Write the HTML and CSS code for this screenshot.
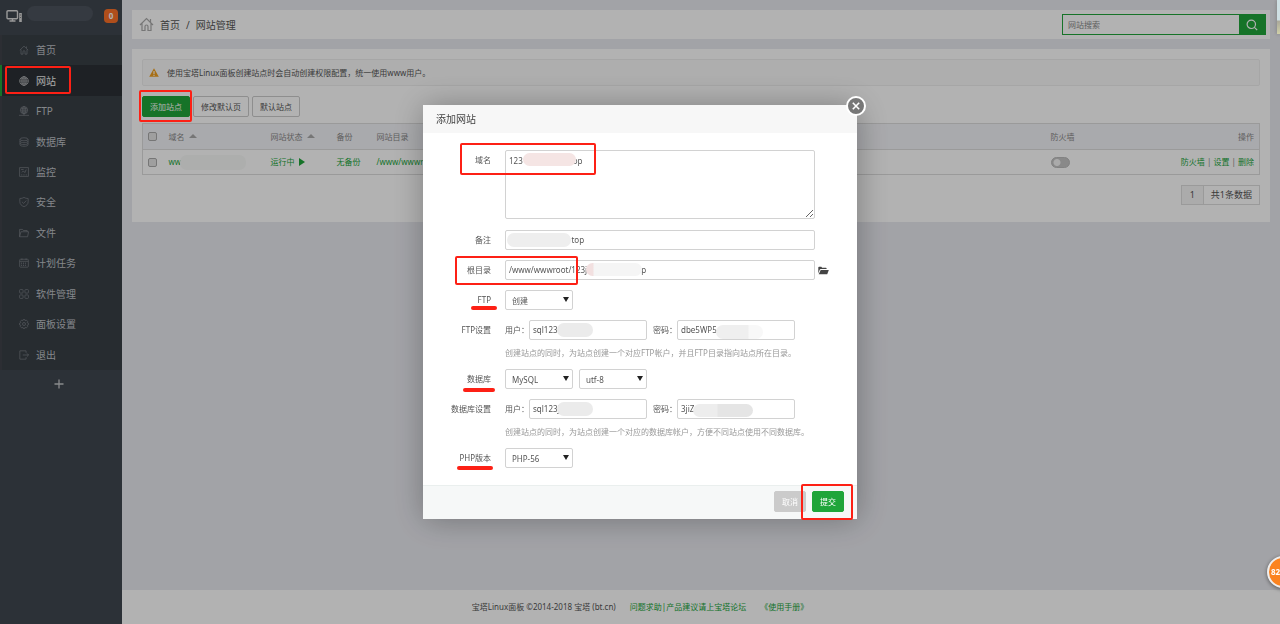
FILE: index.html
```html
<!DOCTYPE html>
<html lang="zh-CN">
<head>
<meta charset="utf-8">
<title>网站管理</title>
<link rel="stylesheet" href="styles.css">
</head>
<body>
<div class="app">
  <aside class="sidebar">
    <div class="account">
      <svg class="account-icon" width="17" height="14" viewBox="0 0 17 14" fill="none" stroke="#dcdcdc" stroke-width="1.4"><rect x="1" y="1.700" width="10.500" height="8" rx="1"/><path d="M3.500 12h6M6.500 10v2"/><path d="M14.500 4v9" stroke-width="2.600"/><path d="M14 6h1M14 8.500h1" stroke="#666" stroke-width=".8"/></svg>
      <span class="account-name"></span>
      <span class="badge">0</span>
    </div>
    <ul class="menu">
      <li><a href="#"><svg viewBox="0 0 12 12"><path d="M1 6.200 6 1.400l5 4.800M2.400 5.500V11h2.400V8a1.200 1.200 0 0 1 2.400 0v3h2.400V5.500M9 1.800v1.800"/></svg>首页</a></li>
      <li class="active"><a href="#"><svg viewBox="0 0 12 12"><circle cx="6" cy="6" r="5.200"/><ellipse cx="6" cy="6" rx="2.500" ry="5.200"/><path d="M.8 6h10.400M6 .8v10.400M1.700 3.400h8.600M1.700 8.600h8.600"/></svg>网站</a></li>
      <li><a href="#"><svg viewBox="0 0 12 12"><circle cx="6" cy="5" r="4.400"/><ellipse cx="6" cy="5" rx="2.100" ry="4.400"/><path d="M1.600 5h8.800M6 .6v10.600M2.300 2.800h7.400M2.300 7.200h7.400M0 11.200h12"/></svg>FTP</a></li>
      <li><a href="#"><svg viewBox="0 0 12 12"><ellipse cx="6" cy="2.700" rx="4.800" ry="1.800"/><path d="M1.200 2.700v6.600c0 2.400 9.600 2.400 9.600 0V2.700M1.200 5c0 2.400 9.600 2.400 9.600 0M1.200 7.300c0 2.400 9.600 2.400 9.600 0"/></svg>数据库</a></li>
      <li><a href="#"><svg viewBox="0 0 12 12"><path d="M.7.7h10.600v10.600H.7zM2.500 3h3M3.500 6.500l1.700-1.800 1.800 2L8.700 3M2.500 9.500h1.500M5.200 9.500h1.500M8 9.500h1.500"/></svg>监控</a></li>
      <li><a href="#"><svg viewBox="0 0 12 12"><path d="M6 .5c1.500 1 3 1.300 5 1.300v3.900c0 3-2.100 4.800-5 5.900C3.100 10.500 1 8.700 1 5.700V1.800C3 1.800 4.500 1.500 6 .5zM3.500 5.700l2 2 3.300-3.400"/></svg>安全</a></li>
      <li><a href="#"><svg viewBox="0 0 12 12"><path d="M.7 10.500V1.700h3.600l1 1.300h4.500v1.500M.7 10.500l1.600-6h9.200l-1.200 6z"/></svg>文件</a></li>
      <li><a href="#"><svg viewBox="0 0 12 12"><rect x=".8" y="1.500" width="10.400" height="9.500" rx="1"/><path d="M.8 4h10.400M3.500.5v2M8.500.5v2"/><path d="M2.500 6.200h7M2.500 8.700h7" stroke-dasharray="1.200 1.100" stroke-width="1.200"/></svg>计划任务</a></li>
      <li><a href="#"><svg viewBox="0 0 12 12"><rect x=".7" y=".7" width="4.200" height="4.200" rx="1"/><rect x="7.100" y=".7" width="4.200" height="4.200" rx="1"/><rect x=".7" y="7.100" width="4.200" height="4.200" rx="1"/><rect x="7.100" y="7.100" width="4.200" height="4.200" rx="1"/></svg>软件管理</a></li>
      <li><a href="#"><svg viewBox="0 0 12 12"><circle cx="6" cy="6" r="1.800"/><path d="M5 .7h2l.4 1.400 1.500-.7 1.500 1.500-.7 1.400 1.600.7v2l-1.600.6.7 1.500-1.500 1.500-1.500-.7-.4 1.400H5l-.5-1.400-1.400.7-1.500-1.500.7-1.500L.7 7V5l1.600-.7-.7-1.400 1.500-1.500 1.400.7z"/></svg>面板设置</a></li>
      <li><a href="#"><svg viewBox="0 0 12 12"><path d="M8.500 3.500V1H1v10h7.500V8.500M4.500 6h7M9.500 4l2 2-2 2"/></svg>退出</a></li>
    </ul>
    <button class="menu-add" type="button" aria-label="添加"><svg width="10" height="10" viewBox="0 0 10 10" stroke="#c4c6c9" stroke-width="1.300"><path d="M5 .5v9M.5 5h9"/></svg></button>
  </aside>

  <div class="main">
    <header class="panel topbar">
      <nav class="crumbs">
        <svg width="15" height="15" viewBox="0 0 15 15" fill="none" stroke="#aaa" stroke-width="1.200"><path d="M1 8 7.500 1.500 14 8M3 6.500v7h3V9.500a1.500 1.500 0 0 1 3 0v4h3v-7M11.500 2v3"/></svg>
        <a href="#">首页</a><span>/</span><a href="#">网站管理</a>
      </nav>
      <form class="search">
        <input type="text" placeholder="网站搜索" aria-label="网站搜索">
        <button type="button" aria-label="搜索"><svg width="12" height="12" viewBox="0 0 12 12" fill="none" stroke="#fff" stroke-width="1.200"><circle cx="5.300" cy="5.300" r="4.200"/><path d="m8.400 8.400 2.800 2.800"/></svg></button>
      </form>
    </header>

    <section class="panel content">
      <p class="notice"><svg width="10" height="9" viewBox="0 0 10 9"><path d="M5 .3 9.800 8.700H.2z" fill="#f0a020"/><path d="M5 3v3M5 6.800v1.100" stroke="#fff" stroke-width="1.100"/></svg>使用宝塔Linux面板创建站点时会自动创建权限配置，统一使用www用户。</p>
      <div class="toolbar">
        <button class="btn btn-green" type="button">添加站点</button>
        <button class="btn" type="button">修改默认页</button>
        <button class="btn" type="button">默认站点</button>
      </div>
      <table class="sites">
        <colgroup><col class="c-check"><col class="c-name"><col class="c-state"><col class="c-backup"><col><col class="c-wall"><col class="c-ops"></colgroup>
        <thead>
          <tr><th><input type="checkbox" aria-label="全选"></th><th>域名<i class="sort"></i></th><th>网站状态<i class="sort"></i></th><th>备份</th><th>网站目录</th><th>防火墙</th><th class="right">操作</th></tr>
        </thead>
        <tbody>
          <tr><td><input type="checkbox" aria-label="选择站点"></td><td><span class="site-name"><a href="#">ww</a><span class="mask mask-site"></span></span></td><td><a href="#">运行中<i class="play"></i></a></td><td><a href="#">无备份</a></td><td><a href="#">/www/wwwroot/</a></td><td><input class="switch" type="checkbox" aria-label="防火墙"></td><td class="right"><a href="#">防火墙</a> | <a href="#">设置</a> | <a href="#">删除</a></td></tr>
        </tbody>
      </table>
      <div class="pager"><span class="page">1</span><span>共1条数据</span></div>
    </section>

    <footer class="footer">
      <span>宝塔Linux面板 ©2014-2018 宝塔 (bt.cn)</span>
      <a href="#">问题求助|产品建议请上宝塔论坛</a>
      <a href="#">《使用手册》</a>
    </footer>
  </div>
</div>

<div class="overlay">
  <form class="modal" role="dialog" aria-labelledby="modal-title">
    <h2 class="modal-title" id="modal-title">添加网站</h2>
    <button class="close" type="button" aria-label="关闭"><svg width="8" height="8" viewBox="0 0 8 8" stroke="#fff" stroke-width="1.600"><path d="m.8.8 6.400 6.400M7.200.8.8 7.200"/></svg></button>
    <div class="modal-body">
      <div class="row row-domain">
        <label for="domain">域名</label>
        <div class="field"><textarea id="domain">123                        op</textarea><span class="mask mask-domain"></span></div>
      </div>
      <div class="row">
        <label for="note">备注</label>
        <div class="field"><input class="wide" id="note" type="text" value="                              top"><span class="mask mask-note"></span></div>
      </div>
      <div class="row">
        <label for="root">根目录</label>
        <div class="field"><input class="wide" id="root" type="text" value="/www/wwwroot/123j                          p"><span class="mask mask-root"></span>
          <button class="folder" type="button" aria-label="选择目录"><svg width="11" height="9" viewBox="0 0 11 9" fill="#444"><path d="M.3 7.500V1.500Q.3.700 1.100.7h2.200l.8 1h3.800q.7 0 .7.700v.7H2.800Q2 3.100 1.700 3.800z"/><path d="M2.700 3.900h8.100L9.200 8.200H.7z"/></svg></button></div>
      </div>
      <div class="row">
        <label for="ftp">FTP</label>
        <div class="field"><span class="select"><select id="ftp"><option>创建</option></select></span></div>
      </div>
      <div class="row">
        <span class="label">FTP设置</span>
        <div>
          <div class="field pair"><label for="fu">用户：</label><input id="fu" type="text" value="sql123"><label class="second" for="fp">密码：</label><input id="fp" type="text" value="dbe5WP5"><span class="mask mask-user"></span><span class="mask mask-pass"></span></div>
          <p class="hint">创建站点的同时，为站点创建一个对应FTP帐户，并且FTP目录指向站点所在目录。</p>
        </div>
      </div>
      <div class="row">
        <label for="db">数据库</label>
        <div class="field selects"><span class="select"><select id="db"><option>MySQL</option></select></span><span class="select"><select aria-label="编码"><option>utf-8</option></select></span></div>
      </div>
      <div class="row">
        <span class="label">数据库设置</span>
        <div>
          <div class="field pair"><label for="du">用户：</label><input id="du" type="text" value="sql123j"><label class="second" for="dp">密码：</label><input id="dp" type="text" value="3jiZ"><span class="mask mask-user"></span><span class="mask mask-dbpass"></span></div>
          <p class="hint">创建站点的同时，为站点创建一个对应的数据库帐户，方便不同站点使用不同数据库。</p>
        </div>
      </div>
      <div class="row">
        <label for="php">PHP版本</label>
        <div class="field"><span class="select"><select id="php"><option>PHP-56</option></select></span></div>
      </div>
    </div>
    <div class="modal-foot">
      <button class="btn btn-gray" type="button">取消</button>
      <button class="btn btn-green" type="button">提交</button>
    </div>
    <span class="mark mark-domain"></span>
    <span class="mark mark-root"></span>
    <span class="mark mark-submit"></span>
    <span class="line line-ftp"></span>
    <span class="line line-db"></span>
    <span class="line line-php"></span>
  </form>
</div>
<span class="mark mark-menu"></span>
<span class="mark mark-add"></span>
<span class="thumb"></span>
<span class="ball">82</span>
</body>
</html>
```
FILE: styles.css
```css
* { box-sizing: border-box; }
body {
  margin: 0;
  overflow: hidden;
  font: 8px/12px "Noto Sans", "Noto Sans CJK SC", sans-serif;
  color: #555;
  background: #e9eaf0;
}
a { color: inherit; text-decoration: none; }
button, input, select, textarea { font: inherit; color: inherit; margin: 0; }
button { padding: 0; border: 0; background: none; }
svg { display: block; flex: none; }
p, h2, ul { margin: 0; padding: 0; }

.app { display: flex; min-height: 100vh; }

/* Sidebar */
.sidebar { flex: none; width: 122px; background: #40474f; }
.account { display: flex; align-items: center; height: 35px; padding: 0 4px 4px 6px; }
.account-name { width: 67px; height: 15px; margin: 0 11px 5px 4px; border-radius: 8px; background: #4c535d; }
.badge {
  width: 14px; height: 14px; border-radius: 4px;
  background: #fb7028; color: #fff; font-weight: bold; line-height: 14px; text-align: center;
}
.menu { display: flex; flex-direction: column; height: 335px; list-style: none; background: #383f46; }
.menu li { flex: 1; border-left: 2px solid #40434a; }
.menu a { display: flex; align-items: center; gap: 7px; height: 100%; padding-left: 17px; color: #bfc2c6; font-size: 10px; }
.menu svg { width: 10px; height: 10px; fill: none; stroke: #80858b; stroke-width: .8; }
.menu .active { background: #2c3035; border-left-color: #20a53a; }
.menu .active a { color: #f0f0f0; }
.menu .active svg { stroke: #c4c6c9; }
.menu-add { display: flex; justify-content: center; align-items: center; width: 100%; height: 28px; padding-right: 4px; }

/* Page */
.main { flex: 1; display: flex; flex-direction: column; min-width: 0; }
.panel { margin: 10px 10px 0; background: #fff; }
.topbar { display: flex; justify-content: space-between; align-items: center; padding: 4px 4px 4px 7px; }
.crumbs { display: flex; align-items: center; gap: 6px; font-size: 10px; }
.search { display: flex; height: 21px; border: 1px solid #20a53a; }
.search input { width: 176px; padding: 0 5px; border: 0; outline: 0; }
.search input::placeholder { color: #888; }
.search button { display: flex; align-items: center; justify-content: center; width: 26px; background: #20a53a; }
.content { padding: 10px 10px 17px; }
.notice {
  display: flex; align-items: center; gap: 8px; height: 27px; padding-left: 6px;
  border: 1px solid #eee; border-radius: 2px; background: #fafafa;
}
.toolbar { display: flex; gap: 3px; margin: 10px 0 6px; }
.btn { height: 21px; padding: 0 7px; border: 1px solid #ccc; border-radius: 2px; background: #fff; }
.btn-green { border-color: #20a53a; background: #20a53a; color: #fff; }
.btn-gray { border-color: #cbcbcb; background: #cbcbcb; color: #fff; }

.sites { width: 100%; table-layout: fixed; border-collapse: collapse; border: 1px solid #ddd; color: #888; }
.sites th, .sites td { height: 26px; padding: 0 5px; text-align: left; font-weight: normal; border-bottom: 1px solid #ddd; }
.sites td { height: 25px; }
.sites th { background: #f3f4f8; }
.sites td a { color: #20a53a; }
.sites .right { text-align: right; }
.c-check { width: 21px; }
.c-name { width: 102px; }
.c-state { width: 66px; }
.c-backup { width: 40px; }
.c-wall { width: 100px; }
.c-ops { width: 114px; }
.sites input { display: block; appearance: none; }
.sites input:not(.switch) { width: 9px; height: 9px; border: 1px solid #aaa; border-radius: 2px; background: #e4e4e4; }
.sites .switch { width: 19px; height: 11px; border-radius: 6px; background: radial-gradient(circle at 5px 50%, #f4f4f4 3px, #c4c4c4 4px); border: 1px solid #bbb; }
.sort { display: inline-block; margin: 0 0 2px 4px; border: 4px solid transparent; border-top: 0; border-bottom-color: #aaa; }
.play { display: inline-block; margin: 0 0 1px 4px; border: 4px solid transparent; border-left: 6px solid #20a53a; border-right: 0; vertical-align: middle; }
.site-name { position: relative; display: block; }
.pager { display: flex; width: max-content; margin: 10px 0 0 auto; border: 1px solid #ddd; line-height: 18px; font-size: 9px; }
.pager span { padding: 0 7px; }
.pager .page { padding: 0 8px; border-right: 1px solid #ddd; background: #f5f5f5; }
.footer { display: flex; justify-content: center; gap: 14px; margin-top: auto; padding: 11px 122px 11px 0; background: #fff; }
.footer a { color: #20a53a; }

/* Dialog */
.overlay { position: fixed; inset: 0; display: flex; align-items: center; justify-content: center; background: rgba(0, 0, 0, .3); }
.modal { position: relative; width: 434px; background: #fff; box-shadow: 1px 1px 30px rgba(0, 0, 0, .3); }
.modal-title { padding: 0 13px; font-size: 10px; font-weight: normal; line-height: 28px; background: #f7f7f7; color: #444; }
.close {
  position: absolute; top: -9px; right: -9px; display: flex; align-items: center; justify-content: center;
  width: 20px; height: 20px; border: 2px solid #fff; border-radius: 50%; background: #777;
}
.modal-body { display: flex; flex-direction: column; gap: 10px; padding: 17px 0; }
.row { display: grid; grid-template-columns: 68px 1fr; column-gap: 14px; line-height: 20px; }
.row-domain { margin-bottom: 1px; }
.row > label, .label { text-align: right; }
.field { position: relative; display: flex; }
.field input, .field textarea, .field select { border: 1px solid #d2d2d2; border-radius: 2px; background: #fff; outline: 0; }
.field input { width: 118px; height: 20px; padding: 0 3px; }
.field .wide { width: 310px; }
.field textarea { width: 310px; height: 69px; padding: 4px 3px; line-height: 12px; }
.pair label { width: 24px; }
.pair .second { margin-left: 6px; }
.selects { gap: 6px; }
.select { position: relative; width: 68px; height: 20px; }
.select select { display: block; appearance: none; width: 100%; height: 100%; padding: 0 6px 1px; }
.select::after { content: ""; position: absolute; top: 7px; right: 4px; border: 3px solid transparent; border-top: 5px solid #222; border-bottom: 0; }
.folder { margin-left: 3px; }
.hint { padding-top: 7px; line-height: 12px; color: #999; }
.modal-foot { display: flex; justify-content: flex-end; gap: 6px; padding: 5px 13px 7px 0; border-top: 1px solid #eaefee; background: #f6f8f8; }
.modal-foot .btn { height: 21px; }

/* Blurred-out values */
.mask { position: absolute; border-radius: 7px; background: #eee; }
.mask-site { left: 11px; top: -1px; width: 66px; height: 15px; background: #f8faf8; }
.mask-domain { left: 18px; top: 3px; width: 53px; height: 13px; background: #f5e5e4; }
.mask-note { left: 2px; top: 3px; width: 64px; height: 14px; }
.mask-root { left: 81px; top: 3px; width: 56px; height: 13px; background: linear-gradient(90deg, #f2e0e0 7px, #f5f5f5 8px); }
.mask-user { left: 52px; top: 3px; width: 36px; height: 14px; background: #ebebeb; }
.mask-pass { left: 211px; top: 5px; width: 47px; height: 14px; background: linear-gradient(90deg, #efefef 32px, #f8f8f8 33px); }
.mask-dbpass { left: 188px; top: 5px; width: 60px; height: 13px; background: linear-gradient(90deg, #ededed 24px, #e5e5e5 25px); }

/* Red annotations */
.mark { position: absolute; border: 2px solid #fd2015; border-radius: 2px; pointer-events: none; }
.mark-menu { left: 5px; top: 66px; width: 66px; height: 28px; }
.mark-add { left: 139px; top: 90px; width: 53px; height: 32px; }
.mark-domain { left: 37px; top: 38px; width: 136px; height: 32px; }
.mark-root { left: 32px; top: 151px; width: 123px; height: 29px; }
.mark-submit { left: 378px; top: 379px; width: 52px; height: 36px; }
.line { position: absolute; height: 4px; border-radius: 2px; background: #fd2015; }
.line-ftp { left: 48px; top: 201px; width: 26px; }
.line-db { left: 40px; top: 283px; width: 32px; }
.line-php { left: 34px; top: 361px; width: 36px; }

/* Floating desktop widgets at the right edge */
.thumb { position: fixed; top: 0; right: 0; width: 3px; height: 34px; background: linear-gradient(#cfe0e4 20px, #aaa89a 21px, #d0d0a8); box-shadow: 0 0 4px #777; }
.ball {
  position: fixed; top: 556px; right: -19px; width: 32px; height: 32px; padding-left: 2px;
  border: 2px solid #eee; border-radius: 50%; background: #fb8320; color: #fff;
  font-weight: bold; line-height: 27px; box-shadow: 0 1px 4px #555;
}
```
